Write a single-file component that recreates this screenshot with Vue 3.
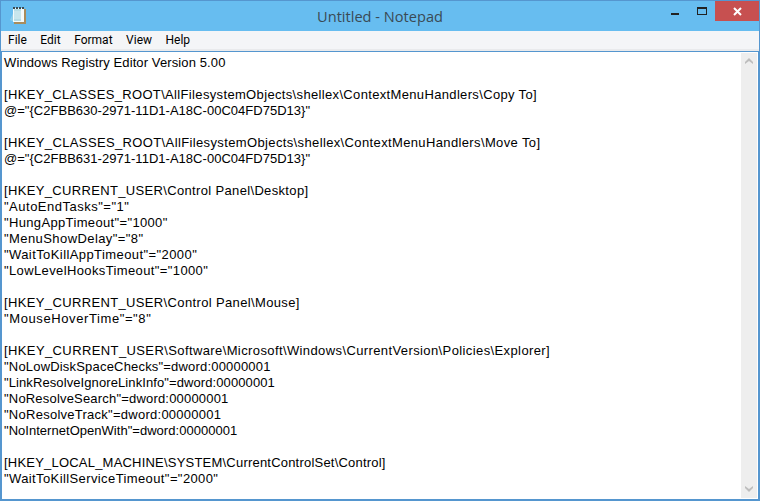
<script setup>
const raw = [
  ['Windows Registry Editor Version 5.00', 221, 225],
  ['', 0, 0],
  ['[HKEY_CLASSES_ROOT\\AllFilesystemObjects\\shellex\\ContextMenuHandlers\\Copy To]', 511, 537],
  ['@="{C2FBB630-2971-11D1-A18C-00C04FD75D13}"', 309, 310],
  ['', 0, 0],
  ['[HKEY_CLASSES_ROOT\\AllFilesystemObjects\\shellex\\ContextMenuHandlers\\Move To]', 512, 540],
  ['@="{C2FBB631-2971-11D1-A18C-00C04FD75D13}"', 309, 310],
  ['', 0, 0],
  ['[HKEY_CURRENT_USER\\Control Panel\\Desktop]', 295, 309],
  ['"AutoEndTasks"="1"', 121, 130],
  ['"HungAppTimeout"="1000"', 160, 168],
  ['"MenuShowDelay"="8"', 135, 143],
  ['"WaitToKillAppTimeout"="2000"', 185, 197],
  ['"LowLevelHooksTimeout"="1000"', 197, 208],
  ['', 0, 0],
  ['[HKEY_CURRENT_USER\\Control Panel\\Mouse]', 285, 299],
  ['"MouseHoverTime"="8"', 139, 151],
  ['', 0, 0],
  ['[HKEY_CURRENT_USER\\Software\\Microsoft\\Windows\\CurrentVersion\\Policies\\Explorer]', 519, 550],
  ['"NoLowDiskSpaceChecks"=dword:00000001', 264, 271],
  ['"LinkResolveIgnoreLinkInfo"=dword:00000001', 271, 275],
  ['"NoResolveSearch"=dword:00000001', 223, 229],
  ['"NoResolveTrack"=dword:00000001', 213, 221],
  ['"NoInternetOpenWith"=dword:00000001', 236, 237],
  ['', 0, 0],
  ['[HKEY_LOCAL_MACHINE\\SYSTEM\\CurrentControlSet\\Control]', 374, 385],
  ['"WaitToKillServiceTimeout"="2000"', 205, 218],
]
const lines = raw.map(([text, natural, target]) => ({
  text,
  spacing: text ? ((target - natural) / text.length).toFixed(3) + 'px' : '0',
}))
const menus = ['File', 'Edit', 'Format', 'View', 'Help']
</script>

<template>
  <div class="window">
    <header class="titlebar">
      <svg class="appicon" width="16" height="17" viewBox="0 0 16 17">
        <path d="M0 13L4 4v11z" fill="#9fd6e6" opacity=".7" />
        <rect x="14" y="2" width="2" height="15" fill="#a98c5c" />
        <rect x="4" y="15" width="12" height="2" fill="#a98c5c" />
        <rect x="3" y="1" width="11" height="14" fill="#f4fbfc" />
        <rect x="4" y="2" width="7" height="12" fill="#b7dde6" />
        <path d="M4 5h7M4 7h7M4 9h7M4 11h7" stroke="#d9eff3" />
        <path d="M3 1h11" stroke="#3c4a50" stroke-width="2" stroke-dasharray="2 1" />
      </svg>
      <div class="title">Untitled - Notepad</div>
      <div class="controls">
        <div class="ctl"><span class="min"></span></div>
        <div class="ctl"><span class="max"></span></div>
        <div class="close">
          <svg width="9" height="9" viewBox="0 0 9 9"><path d="M1 1l7 7M8 1l-7 7" stroke="#fff" stroke-width="2" /></svg>
        </div>
      </div>
    </header>
    <nav class="menubar">
      <span v-for="m in menus" :key="m" class="menu">{{ m }}</span>
    </nav>
    <main class="client">
      <div class="text">
        <div v-for="(l, i) in lines" :key="i" class="line" :style="{ letterSpacing: l.spacing }">{{ l.text }}</div>
      </div>
      <aside class="scroll">
        <svg width="8" height="7" viewBox="0 0 8 7"><path d="M0 6V4l4-4 4 4v2L4 3z" fill="#bdbdbd" /></svg>
        <svg width="8" height="7" viewBox="0 0 8 7"><path d="M0 0v2l4 4 4-4V0L4 3z" fill="#bdbdbd" /></svg>
      </aside>
    </main>
  </div>
</template>

<style>
html, body { margin: 0; padding: 0; }
</style>

<style scoped>
.window {
  width: 760px;
  height: 501px;
  box-sizing: border-box;
  background: #67bdf0;
  border: 1px solid #5596cf;
  display: flex;
  flex-direction: column;
  overflow: hidden;
  font-family: "Open Sans", "Liberation Sans", sans-serif;
}
.titlebar {
  height: 30px;
  flex: none;
  display: flex;
  align-items: flex-start;
  position: relative;
}
.appicon { margin: 6px 0 0 9px; }
.title {
  position: absolute;
  left: 0;
  right: 0;
  top: 5px;
  text-align: center;
  font-size: 14.6px;
  line-height: 20px;
  color: #3a4a55;
}
.controls { margin-left: auto; display: flex; align-items: flex-start; position: relative; }
.ctl { width: 27px; height: 20px; display: flex; justify-content: center; }
.min { width: 8px; height: 2px; background: #222; margin-top: 12px; }
.max { width: 8px; height: 5px; border: 1px solid #222; border-top-width: 2px; margin-top: 6px; }
.close {
  width: 44px;
  height: 20px;
  background: #c75050;
  display: flex;
  align-items: center;
  justify-content: center;
}
.menubar {
  height: 20px;
  box-sizing: border-box;
  flex: none;
  background: #f4f5f7;
  display: flex;
  align-items: center;
  gap: 13.5px;
  padding-left: 7px;
  font-size: 12px;
  color: #000;
  font-family: Roboto, sans-serif;
  border-bottom: 2px solid #e9eaec;
}
.client {
  flex: 1;
  min-height: 0;
  display: flex;
  background: #fff;
  border: 1px solid #5596cf;
}
.text {
  flex: 1;
  min-width: 0;
  padding: 3px 0 0 2px;
  font-family: "Liberation Sans", sans-serif;
  font-size: 13px;
  line-height: 16px;
  color: #000;
  white-space: pre;
}
.line { height: 16px; }
.scroll {
  width: 16px;
  margin: 1px 1px 1px 0;
  background: #eeeeee;
  display: flex;
  flex-direction: column;
  justify-content: space-between;
  align-items: center;
  padding: 5px 0;
  box-sizing: border-box;
}
</style>
